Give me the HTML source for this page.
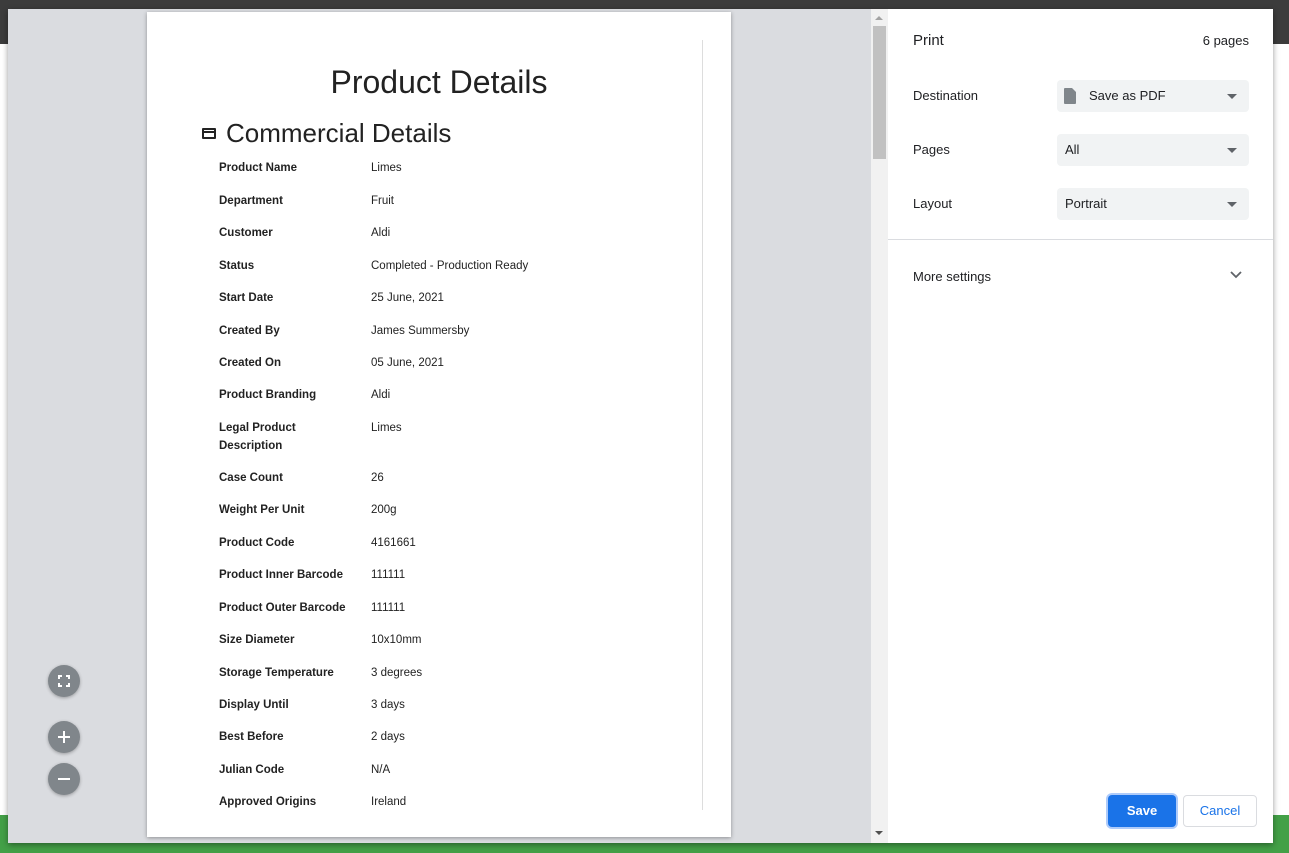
<!DOCTYPE html>
<html><head><meta charset="utf-8"><style>
*{margin:0;padding:0;box-sizing:border-box}
body{width:1289px;height:853px;position:relative;overflow:hidden;background:#fff;font-family:"Liberation Sans",sans-serif}
.abs{position:absolute}
.r{position:absolute;left:0;top:2px;width:1289px}
.lbl{position:absolute;left:219px;font-size:11.5px;font-weight:bold;color:#222}
.val{position:absolute;left:371px;font-size:11.5px;color:#222}
.set{position:absolute;left:913px;font-size:13px;color:#202124}
.sel{position:absolute;left:1057px;width:192px;height:32px;background:#f1f3f4;border-radius:4px;font-size:13px;color:#202124;line-height:32px;padding-left:8px}
.sel:after{content:"";position:absolute;right:12px;top:14px;border-left:5px solid transparent;border-right:5px solid transparent;border-top:5px solid #5f6368}
.fab{position:absolute;left:48px;width:32px;height:32px;border-radius:50%;background:#80868b;box-shadow:0 1px 3px rgba(0,0,0,.3)}
</style></head><body>
<div class="abs" style="left:0;top:0;width:1289px;height:44px;background:#3c3c3c"></div>
<div class="abs" style="left:0;top:815px;width:1289px;height:38px;background:#43a047"></div>
<div class="abs" style="left:8px;top:9px;width:1265px;height:834px;background:#dadce0;box-shadow:0 2px 6px rgba(0,0,0,.4)"></div>
<div class="abs" style="left:147px;top:12px;width:584px;height:825px;background:#fff;box-shadow:0 1px 4px rgba(0,0,0,.35)"></div>
<div class="abs" style="left:702px;top:40px;width:1px;height:770px;background:#ddd"></div>
<div class="abs" style="left:147px;top:64px;width:584px;text-align:center;font-size:32px;color:#222">Product Details</div>
<div class="abs" style="left:202px;top:128px;width:14px;height:11px;border:2px solid #222;border-radius:1px"></div>
<div class="abs" style="left:203px;top:131px;width:12px;height:2px;background:#222"></div>
<div class="abs" style="left:226px;top:118px;font-size:26px;color:#222">Commercial Details</div>
<div class="r">
<div class="lbl" style="top:160px">Product Name</div><div class="val" style="top:160px">Limes</div>
<div class="lbl" style="top:193px">Department</div><div class="val" style="top:193px">Fruit</div>
<div class="lbl" style="top:225px">Customer</div><div class="val" style="top:225px">Aldi</div>
<div class="lbl" style="top:258px">Status</div><div class="val" style="top:258px">Completed - Production Ready</div>
<div class="lbl" style="top:290px">Start Date</div><div class="val" style="top:290px">25 June, 2021</div>
<div class="lbl" style="top:323px">Created By</div><div class="val" style="top:323px">James Summersby</div>
<div class="lbl" style="top:355px">Created On</div><div class="val" style="top:355px">05 June, 2021</div>
<div class="lbl" style="top:387px">Product Branding</div><div class="val" style="top:387px">Aldi</div>
<div class="lbl" style="top:420px">Legal Product</div><div class="lbl" style="top:438px">Description</div><div class="val" style="top:420px">Limes</div>
<div class="lbl" style="top:470px">Case Count</div><div class="val" style="top:470px">26</div>
<div class="lbl" style="top:502px">Weight Per Unit</div><div class="val" style="top:502px">200g</div>
<div class="lbl" style="top:535px">Product Code</div><div class="val" style="top:535px">4161661</div>
<div class="lbl" style="top:567px">Product Inner Barcode</div><div class="val" style="top:567px">111111</div>
<div class="lbl" style="top:600px">Product Outer Barcode</div><div class="val" style="top:600px">111111</div>
<div class="lbl" style="top:632px">Size Diameter</div><div class="val" style="top:632px">10x10mm</div>
<div class="lbl" style="top:665px">Storage Temperature</div><div class="val" style="top:665px">3 degrees</div>
<div class="lbl" style="top:697px">Display Until</div><div class="val" style="top:697px">3 days</div>
<div class="lbl" style="top:729px">Best Before</div><div class="val" style="top:729px">2 days</div>
<div class="lbl" style="top:762px">Julian Code</div><div class="val" style="top:762px">N/A</div>
<div class="lbl" style="top:794px">Approved Origins</div><div class="val" style="top:794px">Ireland</div>
</div>
<div class="fab" style="top:665px"><svg width="32" height="32"><path d="M11 14v-3h3M18 11h3v3M21 18v3h-3M14 21h-3v-3" stroke="#fff" stroke-width="2" fill="none"/></svg></div>
<div class="fab" style="top:721px"><svg width="32" height="32"><path d="M16 10v12M10 16h12" stroke="#fff" stroke-width="2"/></svg></div>
<div class="fab" style="top:763px"><svg width="32" height="32"><path d="M10 16h12" stroke="#fff" stroke-width="2"/></svg></div>
<div class="abs" style="left:871px;top:9px;width:17px;height:834px;background:#f1f1f1"></div>
<div class="abs" style="left:873px;top:26px;width:13px;height:133px;background:#c1c1c1"></div>
<div class="abs" style="left:875px;top:16px;border-left:4px solid transparent;border-right:4px solid transparent;border-bottom:4px solid #a3a3a3"></div>
<div class="abs" style="left:875px;top:831px;border-left:4px solid transparent;border-right:4px solid transparent;border-top:4px solid #505050"></div>
<div class="abs" style="left:888px;top:9px;width:385px;height:834px;background:#fff"></div>
<div class="set" style="top:32px;font-size:15px">Print</div>
<div class="abs" style="left:1150px;top:33px;width:99px;text-align:right;font-size:13px;color:#202124">6 pages</div>
<div class="set" style="top:88px">Destination</div>
<div class="sel" style="top:80px;padding-left:32px"><svg class="abs" style="left:7px;top:8px" width="12" height="16"><path d="M1 0h7l4 4v11a1 1 0 0 1-1 1H1a1 1 0 0 1-1-1V1a1 1 0 0 1 1-1z" fill="#80868b"/></svg>Save as PDF</div>
<div class="set" style="top:142px">Pages</div>
<div class="sel" style="top:134px">All</div>
<div class="set" style="top:196px">Layout</div>
<div class="sel" style="top:188px">Portrait</div>
<div class="abs" style="left:888px;top:239px;width:385px;height:1px;background:#dadce0"></div>
<div class="set" style="top:269px">More settings</div>
<svg class="abs" style="left:1230px;top:271px" width="12" height="8"><path d="M1 1l5 5 5-5" stroke="#5f6368" stroke-width="1.8" fill="none"/></svg>
<div class="abs" style="left:1108px;top:795px;width:68px;height:32px;background:#1a73e8;border-radius:4px;color:#fff;font-weight:bold;font-size:13px;text-align:center;line-height:32px;box-shadow:0 0 0 2px #aecbfa">Save</div>
<div class="abs" style="left:1183px;top:795px;width:74px;height:32px;border:1px solid #dadce0;border-radius:4px;color:#1a73e8;font-size:13px;text-align:center;line-height:30px">Cancel</div>
</body></html>
